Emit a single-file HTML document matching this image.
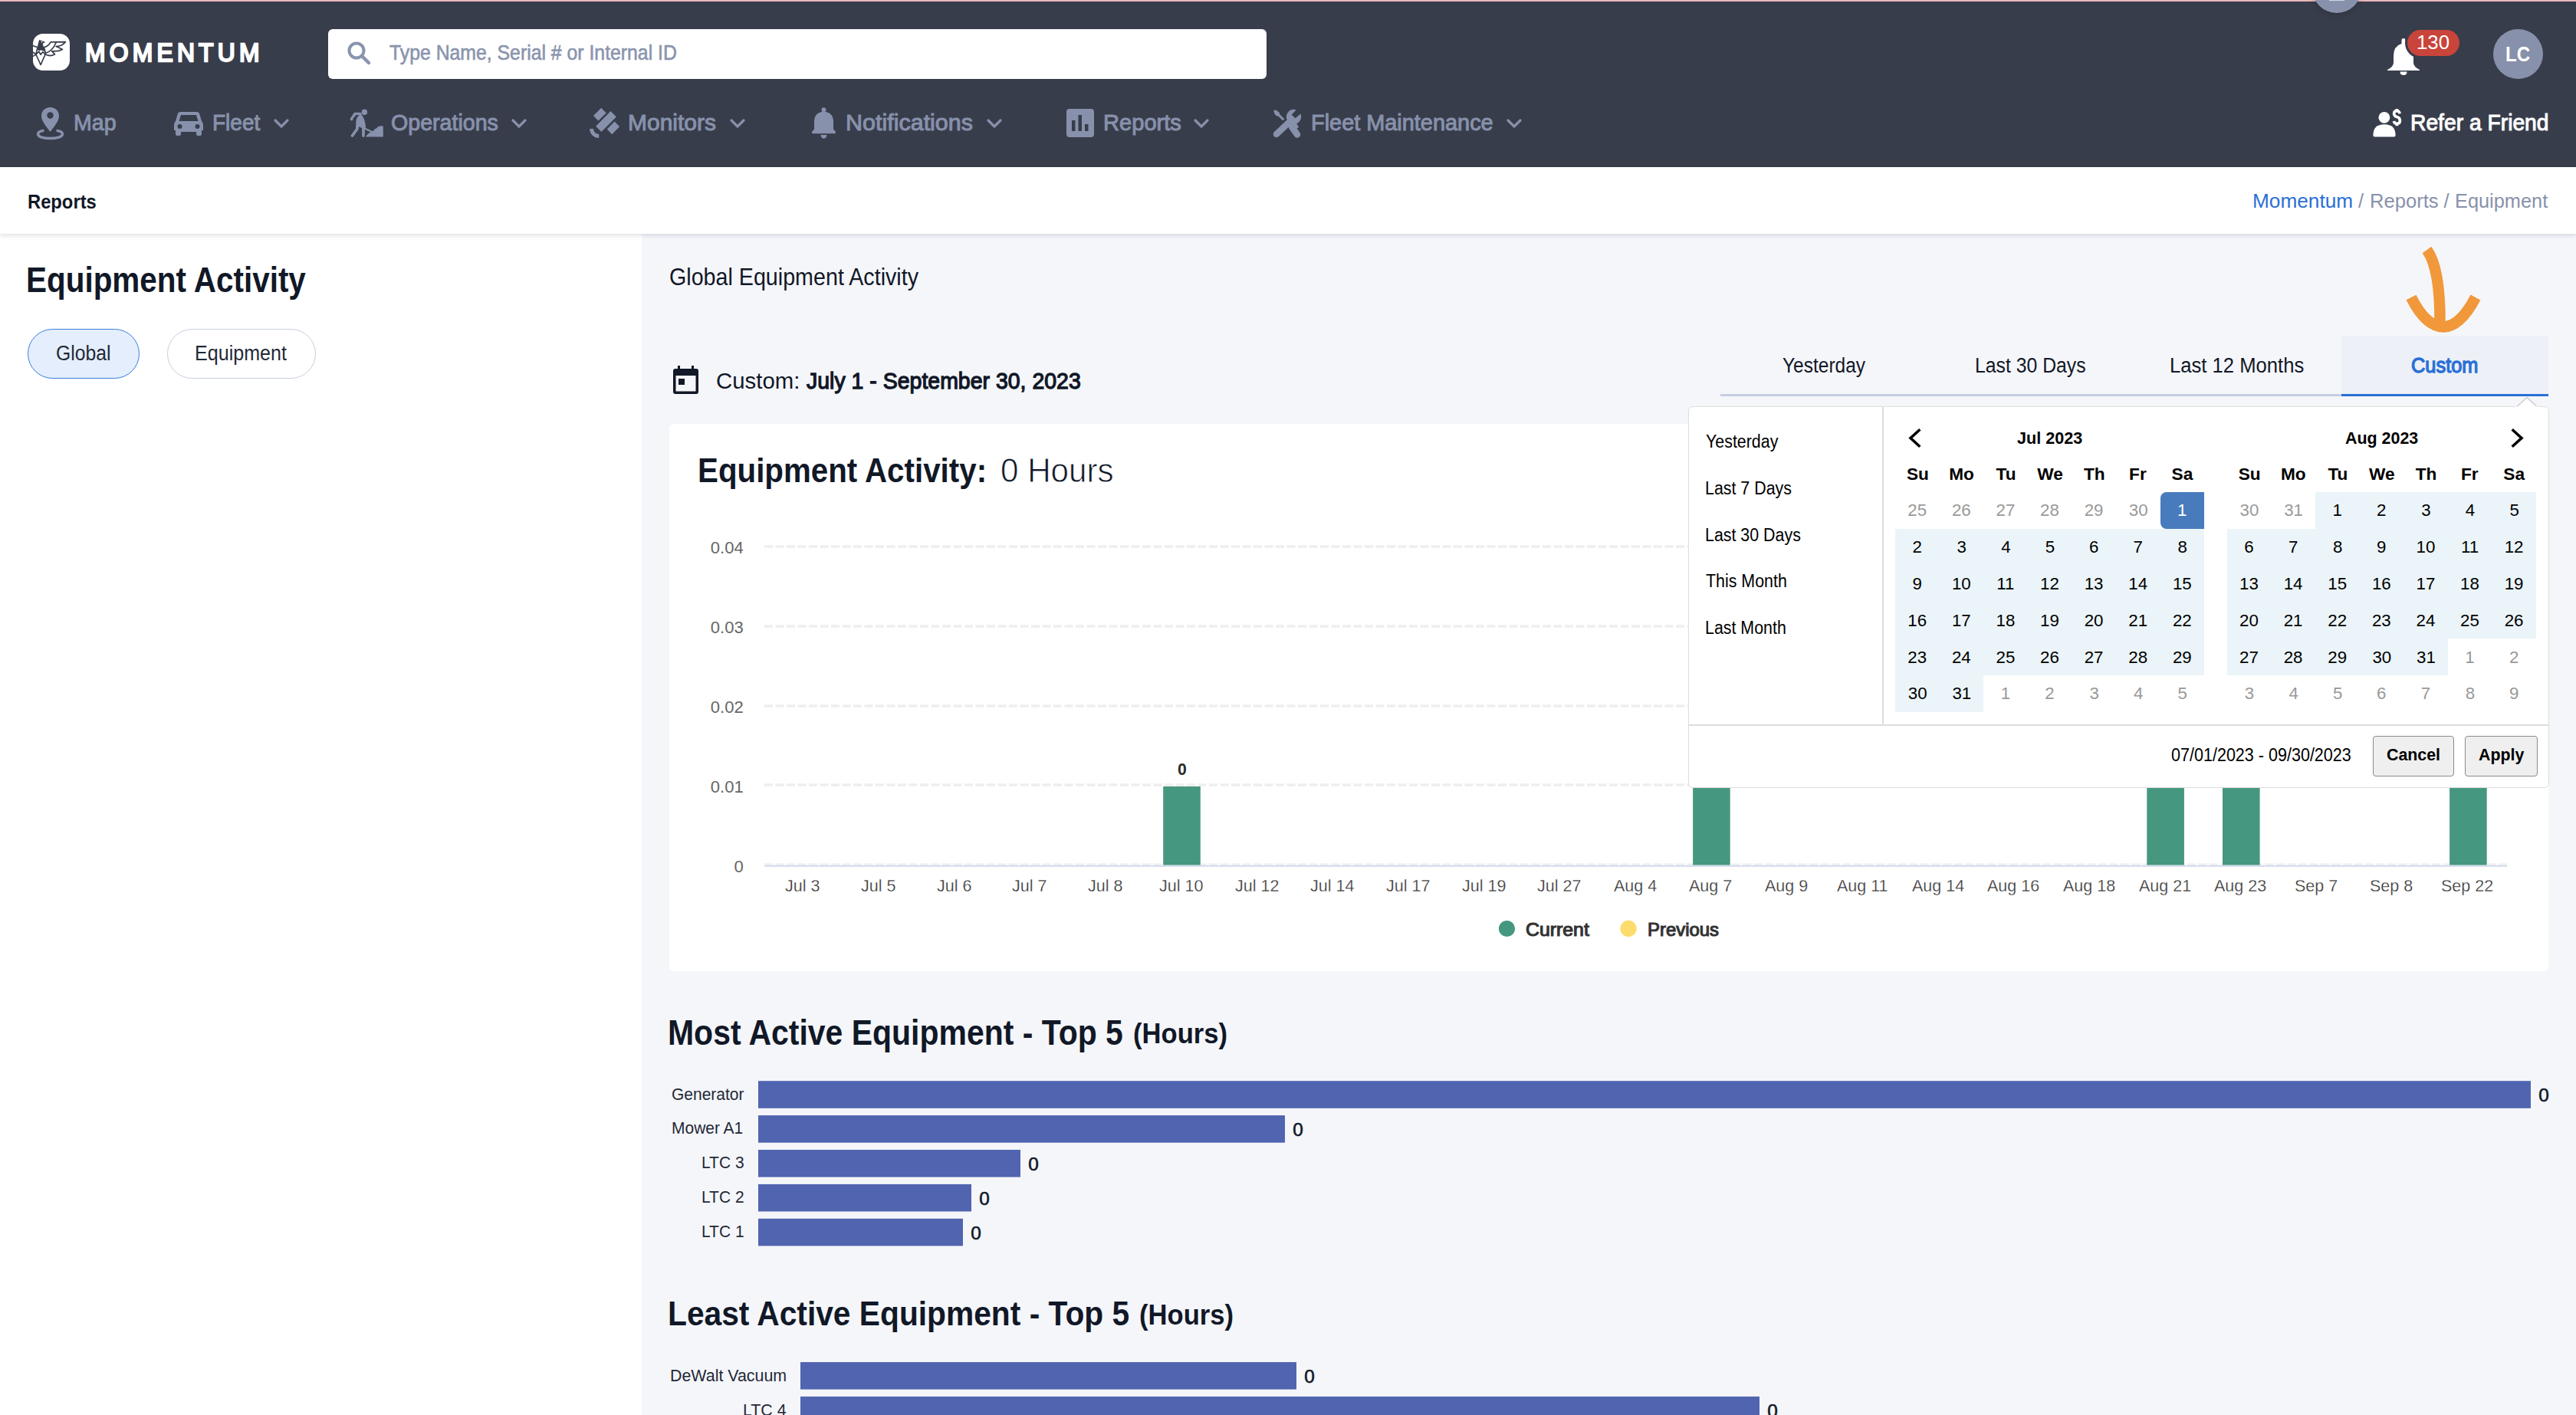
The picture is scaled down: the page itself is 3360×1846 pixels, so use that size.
<!DOCTYPE html>
<html><head><meta charset="utf-8"><title>Equipment Activity</title>
<style>
html,body{margin:0;padding:0;}
body{width:3360px;height:1846px;overflow:hidden;position:relative;background:#f5f6fa;font-family:'Liberation Sans',sans-serif;}
body>div,body>span,body>svg{position:absolute;box-sizing:border-box;}
body>span{white-space:nowrap;transform-origin:0 0;}
@media (max-width:2200px){html{zoom:0.5;}}
</style></head><body>
<div style="left:0px;top:0px;width:3360px;height:218px;background:#383d4b;border-radius:0px;"></div>
<div style="left:0px;top:0px;width:3360px;height:2px;background:#e9b8ba;border-radius:0px;"></div>
<div style="left:3016px;top:-47px;width:64px;height:64px;background:#8791ab;border-radius:32px;box-shadow:0 0 10px rgba(0,0,0,.25);"></div>
<div style="left:3038px;top:0px;width:20px;height:1px;background:#d4d8e2;border-radius:0px;"></div>
<div style="left:43px;top:44px;width:48px;height:48px;background:#ffffff;border-radius:13px;"></div>
<div style="left:428px;top:38px;width:1224px;height:65px;background:#ffffff;border-radius:6px;"></div>
<div style="left:3252px;top:38px;width:65px;height:65px;background:#8791ab;border-radius:33px;"></div>
<div style="left:0px;top:305px;width:837px;height:1541px;background:#ffffff;border-radius:0px;"></div>
<div style="left:0px;top:218px;width:3360px;height:87px;background:#ffffff;border-radius:0px;box-shadow:0 2px 6px rgba(17,24,39,.14);"></div>
<div style="left:36px;top:429px;width:146px;height:65px;background:#e4eefc;border-radius:33px;border:1.5px solid #3b7ddd;"></div>
<div style="left:218px;top:429px;width:194px;height:65px;background:#ffffff;border-radius:33px;border:1.5px solid #c6cee0;"></div>
<div style="left:2244px;top:514px;width:1080px;height:3px;background:#c5cde0;border-radius:0px;"></div>
<div style="left:3054px;top:438px;width:270px;height:76px;background:#edf1f7;border-radius:0px;"></div>
<div style="left:3054px;top:514px;width:270px;height:3px;background:#2a6fd6;border-radius:0px;"></div>
<div style="left:873px;top:553px;width:2451px;height:714px;background:#ffffff;border-radius:6px;"></div>
<svg width="3360" height="1846" viewBox="0 0 3360 1846" style="left:0;top:0"><g fill="none" stroke="#383d4b" stroke-width="1.7" stroke-linejoin="round" stroke-linecap="round"><path d="M46.9 71 L53.1 84.5 L59 71"/><path d="M46.9 70.8 L50.7 67.3 L53.1 71.2 L55.8 67.7 L59 70.8"/><path d="M48.6 63.5 L46.9 70.8"/><path d="M57.3 61.5 L59.5 69.5"/><path d="M57.4 61.8 Q63.5 60 66.1 54.8 L85.5 54.6 Q81 60.6 73.4 60.5"/><path d="M73.4 60.6 L81.5 64.5 Q76 67.5 67.7 66.8"/><path d="M67.7 66.8 L71.6 70.8 Q66 74 59.8 71.3"/><path d="M59.6 69.3 Q69 66 73.2 55.2"/><path d="M43.5 59.8 Q46 61 48.6 61.6"/><path d="M43.5 73.2 Q45 72 47 71.5"/><path d="M43.5 68.5 L46.9 70.8"/></g><path fill="#383d4b" d="M51.1 52.1 L57.8 54.2 L58.8 55.4 L55.8 56.4 L56.8 61.6 L58.6 67.3 L55.8 66 L53.1 65.5 L50.6 66.6 L48.3 63.7 L49.9 56.6 Z"/><circle cx="54.4" cy="54.6" r="0.9" fill="#fff"/><circle cx="465" cy="66" r="9.5" fill="none" stroke="#8a94ae" stroke-width="4"/><line x1="472" y1="73" x2="481" y2="82" stroke="#8a94ae" stroke-width="4.5" stroke-linecap="round"/><path fill="#8791ab" d="M65.5 140 C72.5 140 77 145 77 151.5 C77 158.5 69 167 65.5 172 C62 167 54 158.5 54 151.5 C54 145 58.5 140 65.5 140 Z"/><circle cx="65.5" cy="150.5" r="4.2" fill="#383d4b"/><path d="M56 170.5 C50 171.5 49.5 173.5 49.5 175 C49.5 178.5 57 180.5 65.5 180.5 C74 180.5 81.5 178.5 81.5 175 C81.5 173.5 81 171.5 75 170.5" fill="none" stroke="#8791ab" stroke-width="3.5" stroke-linecap="round"/><path fill="#8791ab" d="M235 146 L257 146 Q259 146 260 148 L263 158 Q265 160 265 164 L265 170 L263 170 L263 175 Q263 177 261 177 L258 177 Q256 177 256 175 L256 172 L236 172 L236 175 Q236 177 234 177 L231 177 Q229 177 229 175 L229 170 L227 170 L227 164 Q227 160 229 158 L232 148 Q233 146 235 146 Z M236 150 L233.5 158 L258.5 158 L256 150 Z"/><circle cx="234.5" cy="165" r="3" fill="#383d4b"/><circle cx="257.5" cy="165" r="3" fill="#383d4b"/><g fill="#8791ab" stroke="#8791ab" stroke-linecap="round" stroke-linejoin="round"><circle cx="475.4" cy="146.2" r="3.7" stroke="none"/><path d="M470 148.5 L463 148.5 L458.5 155.5" fill="none" stroke-width="3.6"/><path d="M471 150 Q475 154 476.5 166 L469 163 L466 167 L465 160 Q465 152 471 150 Z" stroke-width="1.5"/><path d="M466 163 L466 168 L459.5 177" fill="none" stroke-width="3.8"/><path d="M474 166 L474 177" fill="none" stroke-width="3.8"/><path d="M466 163 L486 172.5" fill="none" stroke-width="2"/><path d="M477 178.5 Q480 173 486.5 171 Q489 167.5 491 167.5 Q494 163.5 499.8 164.5 L499.8 178.5 Z" stroke="none"/><path d="M461.5 155 L466 151" fill="none" stroke="#383d4b" stroke-width="2"/></g><g fill="#8791ab"><path d="M784.2 140.8 L790.7 147.4 L780.4 157.6 L774 151 Z"/><path d="M796.5 145 L803.9 152.5 L784.4 172 L777.2 164.8 Z"/><path d="M801.6 158.6 L808.1 165.2 L798.2 175.2 L791.8 168.6 Z"/><path d="M771.6 168 A 9.6 9.6 0 0 0 781.2 177.6" fill="none" stroke="#8791ab" stroke-width="5"/></g><g fill="#8791ab"><circle cx="1074.5" cy="143.3" r="3"/><path d="M1074.5 145.5 Q1062.5 146.5 1062 158 L1062 168.5 L1059 172 Q1058.3 174 1060.5 174.3 L1088.5 174.3 Q1090.7 174 1090 172 L1087 168.5 L1087 158 Q1086.5 146.5 1074.5 145.5 Z"/><path d="M1070.4 176 L1078.6 176 Q1078 180.7 1074.5 180.7 Q1071 180.7 1070.4 176 Z"/></g><rect x="1391" y="142" width="36" height="37" rx="4" fill="#8791ab"/><g fill="#383d4b"><rect x="1398" y="157" width="4.5" height="14"/><rect x="1406.5" y="150" width="4.5" height="21"/><rect x="1415" y="162" width="4.5" height="9"/></g><g fill="#8791ab" stroke="#8791ab" stroke-linecap="round"><path d="M1663 145 L1673.5 155.5" stroke-width="3" fill="none"/><path d="M1661.5 145.5 L1664 143.5 L1668.5 146.5 L1669.5 150 L1666.5 152 L1663 149.5 Z" stroke="none"/><path d="M1685 165.5 L1692 175.5" stroke-width="8.5" fill="none"/><path d="M1681 166 L1690 159 L1694 166 L1686 171 Z" stroke="none"/><path d="M1665 175 L1682 159" stroke-width="8.5" fill="none"/><path d="M1690.6 143.3 A 9.6 9.6 0 1 0 1696.3 148.6 L1689.5 154.3 L1684.7 149.8 Z" stroke="none"/></g><polyline points="359,157 367,165 375,157" fill="none" stroke="#8791ab" stroke-width="3.2" stroke-linecap="round" stroke-linejoin="round"/><polyline points="669,157 677,165 685,157" fill="none" stroke="#8791ab" stroke-width="3.2" stroke-linecap="round" stroke-linejoin="round"/><polyline points="954,157 962,165 970,157" fill="none" stroke="#8791ab" stroke-width="3.2" stroke-linecap="round" stroke-linejoin="round"/><polyline points="1289,157 1297,165 1305,157" fill="none" stroke="#8791ab" stroke-width="3.2" stroke-linecap="round" stroke-linejoin="round"/><polyline points="1559,157 1567,165 1575,157" fill="none" stroke="#8791ab" stroke-width="3.2" stroke-linecap="round" stroke-linejoin="round"/><polyline points="1967,157 1975,165 1983,157" fill="none" stroke="#8791ab" stroke-width="3.2" stroke-linecap="round" stroke-linejoin="round"/><g fill="#fff"><path d="M3135 50 Q3137.5 50 3137.5 53 L3137.5 57 Q3148 60 3148 73 L3148 82 Q3148 87 3156 91 L3156 92 L3114 92 L3114 91 Q3122 87 3122 82 L3122 73 Q3122 60 3132.5 57 L3132.5 53 Q3132.5 50 3135 50 Z"/><path d="M3130.5 93.5 L3139.5 93.5 Q3139.5 98 3135 98 Q3130.5 98 3130.5 93.5 Z"/></g><g fill="#fff"><circle cx="3109.9" cy="153.3" r="7.4"/><path d="M3095.4 176.5 Q3095.4 162.3 3110 162.3 Q3124.6 162.3 3124.6 176.5 Q3124.6 178.6 3122.5 178.6 L3097.5 178.6 Q3095.4 178.6 3095.4 176.5 Z"/><rect x="3124.5" y="142" width="3.8" height="3.5"/><rect x="3124.5" y="160.7" width="3.8" height="3.5"/></g><path d="M3130.3 148.2 Q3129.2 144.6 3126.4 144.6 Q3122.6 144.6 3122.6 148.3 Q3122.6 151.6 3126.4 152.6 Q3130.4 153.6 3130.4 157.4 Q3130.4 161.3 3126.4 161.3 Q3123.2 161.3 3122.3 158" fill="none" stroke="#fff" stroke-width="3.6"/><g fill="#111827"><rect x="878" y="481" width="33" height="33" rx="3"/><rect x="884" y="477" width="3" height="7"/><rect x="902" y="477" width="3" height="7"/></g><rect x="881.5" y="490" width="26" height="20.5" fill="#f5f6fa"/><rect x="885" y="494" width="8" height="8" fill="#111827"/><g fill="none" stroke="#f0983a" stroke-width="14.5" stroke-linecap="butt" stroke-linejoin="round"><path d="M3165.5 326 Q3183 350 3182.5 422"/><path d="M3145 388 Q3164 426 3187 426.5 Q3209 426 3229 388"/></g><line x1="997" y1="713" x2="3270" y2="713" stroke="#eeeeee" stroke-width="3.4" stroke-dasharray="11 3.5"/><line x1="997" y1="817" x2="3270" y2="817" stroke="#eeeeee" stroke-width="3.4" stroke-dasharray="11 3.5"/><line x1="997" y1="921" x2="3270" y2="921" stroke="#eeeeee" stroke-width="3.4" stroke-dasharray="11 3.5"/><line x1="997" y1="1024" x2="3270" y2="1024" stroke="#eeeeee" stroke-width="3.4" stroke-dasharray="11 3.5"/><line x1="997" y1="1127.5" x2="3270" y2="1127.5" stroke="#ececec" stroke-width="2" stroke-dasharray="11 3.5"/><line x1="997" y1="1129.7" x2="3270" y2="1129.7" stroke="#d3d9ec" stroke-width="2"/><rect x="1517.2" y="1026" width="48.6" height="102.5" fill="#46977f"/><rect x="2208.1" y="1026" width="48.6" height="102.5" fill="#46977f"/><rect x="2800.3" y="1026" width="48.6" height="102.5" fill="#46977f"/><rect x="2899.0" y="1026" width="48.6" height="102.5" fill="#46977f"/><rect x="3195.1" y="1026" width="48.6" height="102.5" fill="#46977f"/><circle cx="1965.5" cy="1211.5" r="10.6" fill="#46977f"/><circle cx="2124" cy="1211.5" r="10.7" fill="#fcdc6c"/><rect x="989" y="1410.2" width="2312" height="35.6" fill="#5164b0"/><rect x="989" y="1455.1" width="687" height="35.6" fill="#5164b0"/><rect x="989" y="1500.0" width="342" height="35.6" fill="#5164b0"/><rect x="989" y="1544.9" width="278" height="35.6" fill="#5164b0"/><rect x="989" y="1589.8" width="267" height="35.6" fill="#5164b0"/><rect x="1044" y="1777.0" width="647" height="35.6" fill="#5164b0"/><rect x="1044" y="1821.9" width="1251" height="35.6" fill="#5164b0"/></svg>
<div style="left:3140px;top:39px;width:68px;height:34px;background:#c9443a;border-radius:17px;box-shadow:0 0 0 3px #383d4b;"></div>
<span style="left:111.19px;top:68.79px;font:400 33.50px/0 'Liberation Sans';color:#ffffff;letter-spacing:5.50px;-webkit-text-stroke:2.3px #ffffff;transform:scaleX(0.9500);">MOMENTUM</span>
<span style="left:508.28px;top:68.68px;font:400 26.89px/0 'Liberation Sans';color:#8a94ae;-webkit-text-stroke:0.6px #8a94ae;transform:scaleX(0.9226);">Type Name, Serial # or Internal ID</span>
<span style="left:95.56px;top:159.67px;font:400 29.80px/0 'Liberation Sans';color:#8791ab;-webkit-text-stroke:1.0px #8791ab;transform:scaleX(0.9579);">Map</span>
<span style="left:276.59px;top:159.67px;font:400 29.80px/0 'Liberation Sans';color:#8791ab;-webkit-text-stroke:1.0px #8791ab;transform:scaleX(0.9403);">Fleet</span>
<span style="left:509.52px;top:159.67px;font:400 29.80px/0 'Liberation Sans';color:#8791ab;-webkit-text-stroke:1.0px #8791ab;transform:scaleX(0.9600);">Operations</span>
<span style="left:819.49px;top:159.67px;font:400 29.80px/0 'Liberation Sans';color:#8791ab;-webkit-text-stroke:1.0px #8791ab;transform:scaleX(1.0062);">Monitors</span>
<span style="left:1103.47px;top:159.67px;font:400 29.80px/0 'Liberation Sans';color:#8791ab;-webkit-text-stroke:1.0px #8791ab;transform:scaleX(1.0229);">Notifications</span>
<span style="left:1438.53px;top:159.67px;font:400 29.80px/0 'Liberation Sans';color:#8791ab;-webkit-text-stroke:1.0px #8791ab;transform:scaleX(0.9767);">Reports</span>
<span style="left:1709.55px;top:159.67px;font:400 29.80px/0 'Liberation Sans';color:#8791ab;-webkit-text-stroke:1.0px #8791ab;transform:scaleX(0.9694);">Fleet Maintenance</span>
<span style="left:3143.58px;top:159.67px;font:400 29.80px/0 'Liberation Sans';color:#ffffff;-webkit-text-stroke:1.0px #ffffff;transform:scaleX(0.9479);">Refer a Friend</span>
<span style="left:3151.98px;top:55.26px;font:400 25.21px/0 'Liberation Sans';color:#ffffff;transform:scaleX(1.0236);">130</span>
<span style="left:3268.14px;top:70.57px;font:700 28.05px/0 'Liberation Sans';color:#ffffff;transform:scaleX(0.8580);">LC</span>
<span style="left:35.81px;top:263.08px;font:700 26.60px/0 'Liberation Sans';color:#111827;transform:scaleX(0.8932);">Reports</span>
<span style="left:2937.93px;top:261.93px;font:400 25.29px/0 'Liberation Sans';color:#2a6fd6;transform:scaleX(1.0374);">Momentum</span>
<span style="left:3076.00px;top:261.93px;font:400 25.29px/0 'Liberation Sans';color:#8791ab;">/</span>
<span style="left:3090.97px;top:261.93px;font:400 25.29px/0 'Liberation Sans';color:#8791ab;transform:scaleX(1.0130);">Reports</span>
<span style="left:3187.60px;top:261.93px;font:400 25.29px/0 'Liberation Sans';color:#8791ab;">/</span>
<span style="left:3201.69px;top:261.93px;font:400 25.29px/0 'Liberation Sans';color:#8791ab;transform:scaleX(1.0030);">Equipment</span>
<span style="left:34.15px;top:365.63px;font:700 45.78px/0 'Liberation Sans';color:#111827;transform:scaleX(0.8839);">Equipment Activity</span>
<span style="left:73.11px;top:461.43px;font:400 27.62px/0 'Liberation Sans';color:#1f2937;transform:scaleX(0.8948);">Global</span>
<span style="left:253.78px;top:461.43px;font:400 27.62px/0 'Liberation Sans';color:#1f2937;transform:scaleX(0.9085);">Equipment</span>
<span style="left:873.08px;top:361.67px;font:400 31.25px/0 'Liberation Sans';color:#111827;transform:scaleX(0.9172);">Global Equipment Activity</span>
<span style="left:934.03px;top:495.97px;font:400 30.38px/0 'Liberation Sans';color:#111827;transform:scaleX(0.9672);">Custom:</span>
<span style="left:1051.61px;top:495.97px;font:400 30.38px/0 'Liberation Sans';color:#111827;-webkit-text-stroke:1.3px #111827;transform:scaleX(0.9376);">July 1 - September 30, 2023</span>
<span style="left:2324.80px;top:476.73px;font:400 26.74px/0 'Liberation Sans';color:#111827;transform:scaleX(0.9169);">Yesterday</span>
<span style="left:2576.15px;top:476.73px;font:400 26.74px/0 'Liberation Sans';color:#111827;transform:scaleX(0.9267);">Last 30 Days</span>
<span style="left:2830.08px;top:476.73px;font:400 26.74px/0 'Liberation Sans';color:#111827;transform:scaleX(0.9588);">Last 12 Months</span>
<span style="left:3145.47px;top:477.08px;font:400 27.18px/0 'Liberation Sans';color:#2a6fd6;-webkit-text-stroke:1.3px #2a6fd6;transform:scaleX(0.9341);">Custom</span>
<span style="left:909.88px;top:613.63px;font:700 44.33px/0 'Liberation Sans';color:#111827;transform:scaleX(0.9095);">Equipment Activity:</span>
<span style="left:1304.65px;top:613.85px;font:400 43.70px/0 'Liberation Sans';color:#111827;-webkit-text-stroke:0.8px #ffffff;transform:scaleX(0.9646);">0 Hours</span>
<span style="left:926.75px;top:715.35px;font:400 22.06px/0 'Liberation Sans';color:#666666;">0.04</span>
<span style="left:926.75px;top:819.35px;font:400 22.06px/0 'Liberation Sans';color:#666666;">0.03</span>
<span style="left:926.75px;top:923.35px;font:400 22.06px/0 'Liberation Sans';color:#666666;">0.02</span>
<span style="left:926.75px;top:1027.35px;font:400 22.06px/0 'Liberation Sans';color:#666666;">0.01</span>
<span style="left:957.40px;top:1131.35px;font:400 22.06px/0 'Liberation Sans';color:#666666;">0</span>
<span style="left:1024.39px;top:1155.69px;font:400 21.95px/0 'Liberation Sans';color:#333333;-webkit-text-stroke:0.3px #ffffff;transform:scaleX(0.9800);">Jul 3</span>
<span style="left:1123.09px;top:1155.69px;font:400 21.95px/0 'Liberation Sans';color:#333333;-webkit-text-stroke:0.3px #ffffff;transform:scaleX(0.9800);">Jul 5</span>
<span style="left:1221.79px;top:1155.69px;font:400 21.95px/0 'Liberation Sans';color:#333333;-webkit-text-stroke:0.3px #ffffff;transform:scaleX(0.9800);">Jul 6</span>
<span style="left:1320.49px;top:1155.69px;font:400 21.95px/0 'Liberation Sans';color:#333333;-webkit-text-stroke:0.3px #ffffff;transform:scaleX(0.9800);">Jul 7</span>
<span style="left:1419.19px;top:1155.69px;font:400 21.95px/0 'Liberation Sans';color:#333333;-webkit-text-stroke:0.3px #ffffff;transform:scaleX(0.9800);">Jul 8</span>
<span style="left:1511.91px;top:1155.69px;font:400 21.95px/0 'Liberation Sans';color:#333333;-webkit-text-stroke:0.3px #ffffff;transform:scaleX(0.9800);">Jul 10</span>
<span style="left:1610.61px;top:1155.69px;font:400 21.95px/0 'Liberation Sans';color:#333333;-webkit-text-stroke:0.3px #ffffff;transform:scaleX(0.9800);">Jul 12</span>
<span style="left:1709.31px;top:1155.69px;font:400 21.95px/0 'Liberation Sans';color:#333333;-webkit-text-stroke:0.3px #ffffff;transform:scaleX(0.9800);">Jul 14</span>
<span style="left:1808.01px;top:1155.69px;font:400 21.95px/0 'Liberation Sans';color:#333333;-webkit-text-stroke:0.3px #ffffff;transform:scaleX(0.9800);">Jul 17</span>
<span style="left:1906.71px;top:1155.69px;font:400 21.95px/0 'Liberation Sans';color:#333333;-webkit-text-stroke:0.3px #ffffff;transform:scaleX(0.9800);">Jul 19</span>
<span style="left:2005.41px;top:1155.69px;font:400 21.95px/0 'Liberation Sans';color:#333333;-webkit-text-stroke:0.3px #ffffff;transform:scaleX(0.9800);">Jul 27</span>
<span style="left:2104.71px;top:1155.69px;font:400 21.95px/0 'Liberation Sans';color:#333333;-webkit-text-stroke:0.3px #ffffff;transform:scaleX(0.9800);">Aug 4</span>
<span style="left:2203.41px;top:1155.69px;font:400 21.95px/0 'Liberation Sans';color:#333333;-webkit-text-stroke:0.3px #ffffff;transform:scaleX(0.9800);">Aug 7</span>
<span style="left:2302.11px;top:1155.69px;font:400 21.95px/0 'Liberation Sans';color:#333333;-webkit-text-stroke:0.3px #ffffff;transform:scaleX(0.9800);">Aug 9</span>
<span style="left:2395.63px;top:1155.69px;font:400 21.95px/0 'Liberation Sans';color:#333333;-webkit-text-stroke:0.3px #ffffff;transform:scaleX(0.9800);">Aug 11</span>
<span style="left:2493.53px;top:1155.69px;font:400 21.95px/0 'Liberation Sans';color:#333333;-webkit-text-stroke:0.3px #ffffff;transform:scaleX(0.9800);">Aug 14</span>
<span style="left:2592.23px;top:1155.69px;font:400 21.95px/0 'Liberation Sans';color:#333333;-webkit-text-stroke:0.3px #ffffff;transform:scaleX(0.9800);">Aug 16</span>
<span style="left:2690.93px;top:1155.69px;font:400 21.95px/0 'Liberation Sans';color:#333333;-webkit-text-stroke:0.3px #ffffff;transform:scaleX(0.9800);">Aug 18</span>
<span style="left:2789.63px;top:1155.69px;font:400 21.95px/0 'Liberation Sans';color:#333333;-webkit-text-stroke:0.3px #ffffff;transform:scaleX(0.9800);">Aug 21</span>
<span style="left:2888.33px;top:1155.69px;font:400 21.95px/0 'Liberation Sans';color:#333333;-webkit-text-stroke:0.3px #ffffff;transform:scaleX(0.9800);">Aug 23</span>
<span style="left:2992.52px;top:1155.69px;font:400 21.95px/0 'Liberation Sans';color:#333333;-webkit-text-stroke:0.3px #ffffff;transform:scaleX(0.9800);">Sep 7</span>
<span style="left:3091.22px;top:1155.69px;font:400 21.95px/0 'Liberation Sans';color:#333333;-webkit-text-stroke:0.3px #ffffff;transform:scaleX(0.9800);">Sep 8</span>
<span style="left:3183.94px;top:1155.69px;font:400 21.95px/0 'Liberation Sans';color:#333333;-webkit-text-stroke:0.3px #ffffff;transform:scaleX(0.9800);">Sep 22</span>
<span style="left:1536.00px;top:1004.45px;font:700 21.20px/0 'Liberation Sans';color:#2b2b2b;">0</span>
<span style="left:2226.90px;top:1004.45px;font:700 21.20px/0 'Liberation Sans';color:#2b2b2b;">0</span>
<span style="left:2819.10px;top:1004.45px;font:700 21.20px/0 'Liberation Sans';color:#2b2b2b;">0</span>
<span style="left:2917.80px;top:1004.45px;font:700 21.20px/0 'Liberation Sans';color:#2b2b2b;">0</span>
<span style="left:3213.90px;top:1004.45px;font:700 21.20px/0 'Liberation Sans';color:#2b2b2b;">0</span>
<span style="left:1989.52px;top:1212.94px;font:400 23.26px/0 'Liberation Sans';color:#333333;-webkit-text-stroke:1.1px #333333;transform:scaleX(1.0682);">Current</span>
<span style="left:2148.54px;top:1212.94px;font:400 23.26px/0 'Liberation Sans';color:#333333;-webkit-text-stroke:1.1px #333333;transform:scaleX(1.0286);">Previous</span>
<span style="left:871.36px;top:1346.87px;font:700 46.51px/0 'Liberation Sans';color:#111827;transform:scaleX(0.8808);">Most Active Equipment - Top 5</span>
<span style="left:1478.05px;top:1349.40px;font:700 36.34px/0 'Liberation Sans';color:#111827;transform:scaleX(0.9523);">(Hours)</span>
<span style="left:875.90px;top:1427.54px;font:400 22.09px/0 'Liberation Sans';color:#1f2937;transform:scaleX(0.9500);">Generator</span>
<span style="left:3311.30px;top:1429.06px;font:400 24.36px/0 'Liberation Sans';color:#111827;-webkit-text-stroke:0.6px #111827;">0</span>
<span style="left:875.85px;top:1472.44px;font:400 22.09px/0 'Liberation Sans';color:#1f2937;transform:scaleX(0.9500);">Mower A1</span>
<span style="left:1686.30px;top:1473.96px;font:400 24.36px/0 'Liberation Sans';color:#111827;-webkit-text-stroke:0.6px #111827;">0</span>
<span style="left:914.71px;top:1517.34px;font:400 22.09px/0 'Liberation Sans';color:#1f2937;transform:scaleX(0.9500);">LTC 3</span>
<span style="left:1341.30px;top:1518.86px;font:400 24.36px/0 'Liberation Sans';color:#111827;-webkit-text-stroke:0.6px #111827;">0</span>
<span style="left:914.71px;top:1562.24px;font:400 22.09px/0 'Liberation Sans';color:#1f2937;transform:scaleX(0.9500);">LTC 2</span>
<span style="left:1277.30px;top:1563.76px;font:400 24.36px/0 'Liberation Sans';color:#111827;-webkit-text-stroke:0.6px #111827;">0</span>
<span style="left:914.71px;top:1607.14px;font:400 22.09px/0 'Liberation Sans';color:#1f2937;transform:scaleX(0.9500);">LTC 1</span>
<span style="left:1266.30px;top:1608.66px;font:400 24.36px/0 'Liberation Sans';color:#111827;-webkit-text-stroke:0.6px #111827;">0</span>
<span style="left:871.29px;top:1714.38px;font:700 45.06px/0 'Liberation Sans';color:#111827;transform:scaleX(0.9044);">Least Active Equipment - Top 5</span>
<span style="left:1486.05px;top:1716.40px;font:700 36.34px/0 'Liberation Sans';color:#111827;transform:scaleX(0.9523);">(Hours)</span>
<span style="left:873.57px;top:1795.19px;font:400 22.53px/0 'Liberation Sans';color:#1f2937;transform:scaleX(0.9500);">DeWalt Vacuum</span>
<span style="left:1701.30px;top:1795.86px;font:400 24.36px/0 'Liberation Sans';color:#111827;-webkit-text-stroke:0.6px #111827;">0</span>
<span style="left:968.84px;top:1840.19px;font:400 22.53px/0 'Liberation Sans';color:#1f2937;transform:scaleX(0.9500);">LTC 4</span>
<span style="left:2305.30px;top:1840.76px;font:400 24.36px/0 'Liberation Sans';color:#111827;-webkit-text-stroke:0.6px #111827;">0</span>
<div style="left:2202px;top:530px;width:1123px;height:498px;background:#ffffff;border-radius:6px;border:1.5px solid #dddddd;"></div>
<svg width="40" height="20" viewBox="0 0 40 20" style="left:3276px;top:516px"><path d="M6.5 15 L20 2.5 L33.5 15" fill="#fff" stroke="#cccccc" stroke-width="1.5"/><rect x="5" y="14.2" width="30" height="5" fill="#fff"/></svg>
<div style="left:2455px;top:531px;width:1.5px;height:414px;background:#dddddd;border-radius:0px;"></div>
<div style="left:2203px;top:945px;width:1121px;height:1.5px;background:#dddddd;border-radius:0px;"></div>
<div style="left:2472.2px;top:690.1px;width:403.1999999999998px;height:191.0px;background:#ebf4f8;border-radius:0px;"></div>
<div style="left:2472.2px;top:881.1px;width:115.19999999999982px;height:47.75px;background:#ebf4f8;border-radius:0px;"></div>
<div style="left:2817.7999999999997px;top:642.35px;width:57.59999999999991px;height:47.75px;background:#477bbd;border-radius:0px;border-radius:8px 0 0 8px;"></div>
<div style="left:3020.2px;top:642.35px;width:288.0px;height:47.75px;background:#ebf4f8;border-radius:0px;"></div>
<div style="left:2905px;top:690.1px;width:403.1999999999998px;height:143.25px;background:#ebf4f8;border-radius:0px;"></div>
<div style="left:2905px;top:833.35px;width:288.0px;height:47.75px;background:#ebf4f8;border-radius:0px;"></div>
<div style="left:3095px;top:960px;width:106px;height:52.5px;background:#efefef;border-radius:4px;border:1.5px solid #8a8a8a;"></div>
<div style="left:3215px;top:960px;width:95px;height:52.5px;background:#efefef;border-radius:4px;border:1.5px solid #8a8a8a;"></div>
<svg width="3360" height="1846" viewBox="0 0 3360 1846" style="left:0;top:0"><polyline points="2503,561.5 2492,571.5 2503,581.5" fill="none" stroke="#000" stroke-width="3.6" stroke-linecap="square"/><polyline points="3278,561.5 3289,571.5 3278,581.5" fill="none" stroke="#000" stroke-width="3.6" stroke-linecap="square"/></svg>
<span style="left:2225.00px;top:576.33px;font:400 23.00px/0 'Liberation Sans';color:#000000;transform:scaleX(0.9300);">Yesterday</span>
<span style="left:2224.07px;top:636.98px;font:400 23.00px/0 'Liberation Sans';color:#000000;transform:scaleX(0.9300);">Last 7 Days</span>
<span style="left:2224.07px;top:697.63px;font:400 23.00px/0 'Liberation Sans';color:#000000;transform:scaleX(0.9300);">Last 30 Days</span>
<span style="left:2225.00px;top:758.28px;font:400 23.00px/0 'Liberation Sans';color:#000000;transform:scaleX(0.9300);">This Month</span>
<span style="left:2224.07px;top:818.93px;font:400 23.00px/0 'Liberation Sans';color:#000000;transform:scaleX(0.9300);">Last Month</span>
<span style="left:2631.00px;top:570.84px;font:700 22.97px/0 'Liberation Sans';color:#000000;transform:scaleX(0.9406);">Jul 2023</span>
<span style="left:3059.00px;top:570.74px;font:700 22.67px/0 'Liberation Sans';color:#000000;transform:scaleX(0.9457);">Aug 2023</span>
<span style="left:2486.94px;top:618.34px;font:700 22.67px/0 'Liberation Sans';color:#000000;">Su</span>
<span style="left:2919.74px;top:618.34px;font:700 22.67px/0 'Liberation Sans';color:#000000;">Su</span>
<span style="left:2542.16px;top:618.34px;font:700 22.67px/0 'Liberation Sans';color:#000000;">Mo</span>
<span style="left:2974.96px;top:618.34px;font:700 22.67px/0 'Liberation Sans';color:#000000;">Mo</span>
<span style="left:2603.62px;top:618.34px;font:700 22.67px/0 'Liberation Sans';color:#000000;">Tu</span>
<span style="left:3036.42px;top:618.34px;font:700 22.67px/0 'Liberation Sans';color:#000000;">Tu</span>
<span style="left:2657.31px;top:618.34px;font:700 22.67px/0 'Liberation Sans';color:#000000;">We</span>
<span style="left:3090.11px;top:618.34px;font:700 22.67px/0 'Liberation Sans';color:#000000;">We</span>
<span style="left:2717.98px;top:618.34px;font:700 22.67px/0 'Liberation Sans';color:#000000;">Th</span>
<span style="left:3150.78px;top:618.34px;font:700 22.67px/0 'Liberation Sans';color:#000000;">Th</span>
<span style="left:2777.08px;top:618.34px;font:700 22.67px/0 'Liberation Sans';color:#000000;">Fr</span>
<span style="left:3209.88px;top:618.34px;font:700 22.67px/0 'Liberation Sans';color:#000000;">Fr</span>
<span style="left:2832.54px;top:618.34px;font:700 22.67px/0 'Liberation Sans';color:#000000;">Sa</span>
<span style="left:3265.34px;top:618.34px;font:700 22.67px/0 'Liberation Sans';color:#000000;">Sa</span>
<span style="left:2488.30px;top:666.17px;font:400 22.30px/0 'Liberation Sans';color:#999999;">25</span>
<span style="left:2545.90px;top:666.17px;font:400 22.30px/0 'Liberation Sans';color:#999999;">26</span>
<span style="left:2603.50px;top:666.17px;font:400 22.30px/0 'Liberation Sans';color:#999999;">27</span>
<span style="left:2661.10px;top:666.17px;font:400 22.30px/0 'Liberation Sans';color:#999999;">28</span>
<span style="left:2718.70px;top:666.17px;font:400 22.30px/0 'Liberation Sans';color:#999999;">29</span>
<span style="left:2776.80px;top:666.17px;font:400 22.30px/0 'Liberation Sans';color:#999999;">30</span>
<span style="left:2840.10px;top:666.17px;font:400 22.30px/0 'Liberation Sans';color:#ffffff;">1</span>
<span style="left:2494.50px;top:714.02px;font:400 22.30px/0 'Liberation Sans';color:#000000;">2</span>
<span style="left:2552.60px;top:714.02px;font:400 22.30px/0 'Liberation Sans';color:#000000;">3</span>
<span style="left:2610.20px;top:714.02px;font:400 22.30px/0 'Liberation Sans';color:#000000;">4</span>
<span style="left:2667.80px;top:714.02px;font:400 22.30px/0 'Liberation Sans';color:#000000;">5</span>
<span style="left:2724.90px;top:714.02px;font:400 22.30px/0 'Liberation Sans';color:#000000;">6</span>
<span style="left:2782.50px;top:714.02px;font:400 22.30px/0 'Liberation Sans';color:#000000;">7</span>
<span style="left:2840.60px;top:714.02px;font:400 22.30px/0 'Liberation Sans';color:#000000;">8</span>
<span style="left:2494.50px;top:761.87px;font:400 22.30px/0 'Liberation Sans';color:#000000;">9</span>
<span style="left:2545.90px;top:761.87px;font:400 22.30px/0 'Liberation Sans';color:#000000;">10</span>
<span style="left:2604.33px;top:761.87px;font:400 22.30px/0 'Liberation Sans';color:#000000;">11</span>
<span style="left:2661.10px;top:761.87px;font:400 22.30px/0 'Liberation Sans';color:#000000;">12</span>
<span style="left:2718.70px;top:761.87px;font:400 22.30px/0 'Liberation Sans';color:#000000;">13</span>
<span style="left:2776.30px;top:761.87px;font:400 22.30px/0 'Liberation Sans';color:#000000;">14</span>
<span style="left:2833.90px;top:761.87px;font:400 22.30px/0 'Liberation Sans';color:#000000;">15</span>
<span style="left:2488.30px;top:809.72px;font:400 22.30px/0 'Liberation Sans';color:#000000;">16</span>
<span style="left:2545.90px;top:809.72px;font:400 22.30px/0 'Liberation Sans';color:#000000;">17</span>
<span style="left:2603.50px;top:809.72px;font:400 22.30px/0 'Liberation Sans';color:#000000;">18</span>
<span style="left:2661.10px;top:809.72px;font:400 22.30px/0 'Liberation Sans';color:#000000;">19</span>
<span style="left:2718.70px;top:809.72px;font:400 22.30px/0 'Liberation Sans';color:#000000;">20</span>
<span style="left:2776.30px;top:809.72px;font:400 22.30px/0 'Liberation Sans';color:#000000;">21</span>
<span style="left:2833.90px;top:809.72px;font:400 22.30px/0 'Liberation Sans';color:#000000;">22</span>
<span style="left:2488.30px;top:857.57px;font:400 22.30px/0 'Liberation Sans';color:#000000;">23</span>
<span style="left:2545.90px;top:857.57px;font:400 22.30px/0 'Liberation Sans';color:#000000;">24</span>
<span style="left:2603.50px;top:857.57px;font:400 22.30px/0 'Liberation Sans';color:#000000;">25</span>
<span style="left:2661.10px;top:857.57px;font:400 22.30px/0 'Liberation Sans';color:#000000;">26</span>
<span style="left:2718.70px;top:857.57px;font:400 22.30px/0 'Liberation Sans';color:#000000;">27</span>
<span style="left:2776.30px;top:857.57px;font:400 22.30px/0 'Liberation Sans';color:#000000;">28</span>
<span style="left:2833.90px;top:857.57px;font:400 22.30px/0 'Liberation Sans';color:#000000;">29</span>
<span style="left:2488.80px;top:905.42px;font:400 22.30px/0 'Liberation Sans';color:#000000;">30</span>
<span style="left:2546.40px;top:905.42px;font:400 22.30px/0 'Liberation Sans';color:#000000;">31</span>
<span style="left:2609.70px;top:905.42px;font:400 22.30px/0 'Liberation Sans';color:#999999;">1</span>
<span style="left:2667.30px;top:905.42px;font:400 22.30px/0 'Liberation Sans';color:#999999;">2</span>
<span style="left:2725.40px;top:905.42px;font:400 22.30px/0 'Liberation Sans';color:#999999;">3</span>
<span style="left:2783.00px;top:905.42px;font:400 22.30px/0 'Liberation Sans';color:#999999;">4</span>
<span style="left:2840.60px;top:905.42px;font:400 22.30px/0 'Liberation Sans';color:#999999;">5</span>
<span style="left:2921.60px;top:666.17px;font:400 22.30px/0 'Liberation Sans';color:#999999;">30</span>
<span style="left:2979.20px;top:666.17px;font:400 22.30px/0 'Liberation Sans';color:#999999;">31</span>
<span style="left:3042.50px;top:666.17px;font:400 22.30px/0 'Liberation Sans';color:#000000;">1</span>
<span style="left:3100.10px;top:666.17px;font:400 22.30px/0 'Liberation Sans';color:#000000;">2</span>
<span style="left:3158.20px;top:666.17px;font:400 22.30px/0 'Liberation Sans';color:#000000;">3</span>
<span style="left:3215.80px;top:666.17px;font:400 22.30px/0 'Liberation Sans';color:#000000;">4</span>
<span style="left:3273.40px;top:666.17px;font:400 22.30px/0 'Liberation Sans';color:#000000;">5</span>
<span style="left:2927.30px;top:714.02px;font:400 22.30px/0 'Liberation Sans';color:#000000;">6</span>
<span style="left:2984.90px;top:714.02px;font:400 22.30px/0 'Liberation Sans';color:#000000;">7</span>
<span style="left:3043.00px;top:714.02px;font:400 22.30px/0 'Liberation Sans';color:#000000;">8</span>
<span style="left:3100.10px;top:714.02px;font:400 22.30px/0 'Liberation Sans';color:#000000;">9</span>
<span style="left:3151.50px;top:714.02px;font:400 22.30px/0 'Liberation Sans';color:#000000;">10</span>
<span style="left:3209.93px;top:714.02px;font:400 22.30px/0 'Liberation Sans';color:#000000;">11</span>
<span style="left:3266.70px;top:714.02px;font:400 22.30px/0 'Liberation Sans';color:#000000;">12</span>
<span style="left:2921.10px;top:761.87px;font:400 22.30px/0 'Liberation Sans';color:#000000;">13</span>
<span style="left:2978.70px;top:761.87px;font:400 22.30px/0 'Liberation Sans';color:#000000;">14</span>
<span style="left:3036.30px;top:761.87px;font:400 22.30px/0 'Liberation Sans';color:#000000;">15</span>
<span style="left:3093.90px;top:761.87px;font:400 22.30px/0 'Liberation Sans';color:#000000;">16</span>
<span style="left:3151.50px;top:761.87px;font:400 22.30px/0 'Liberation Sans';color:#000000;">17</span>
<span style="left:3209.10px;top:761.87px;font:400 22.30px/0 'Liberation Sans';color:#000000;">18</span>
<span style="left:3266.70px;top:761.87px;font:400 22.30px/0 'Liberation Sans';color:#000000;">19</span>
<span style="left:2921.10px;top:809.72px;font:400 22.30px/0 'Liberation Sans';color:#000000;">20</span>
<span style="left:2978.70px;top:809.72px;font:400 22.30px/0 'Liberation Sans';color:#000000;">21</span>
<span style="left:3036.30px;top:809.72px;font:400 22.30px/0 'Liberation Sans';color:#000000;">22</span>
<span style="left:3093.90px;top:809.72px;font:400 22.30px/0 'Liberation Sans';color:#000000;">23</span>
<span style="left:3151.50px;top:809.72px;font:400 22.30px/0 'Liberation Sans';color:#000000;">24</span>
<span style="left:3209.10px;top:809.72px;font:400 22.30px/0 'Liberation Sans';color:#000000;">25</span>
<span style="left:3266.70px;top:809.72px;font:400 22.30px/0 'Liberation Sans';color:#000000;">26</span>
<span style="left:2921.10px;top:857.57px;font:400 22.30px/0 'Liberation Sans';color:#000000;">27</span>
<span style="left:2978.70px;top:857.57px;font:400 22.30px/0 'Liberation Sans';color:#000000;">28</span>
<span style="left:3036.30px;top:857.57px;font:400 22.30px/0 'Liberation Sans';color:#000000;">29</span>
<span style="left:3094.40px;top:857.57px;font:400 22.30px/0 'Liberation Sans';color:#000000;">30</span>
<span style="left:3152.00px;top:857.57px;font:400 22.30px/0 'Liberation Sans';color:#000000;">31</span>
<span style="left:3215.30px;top:857.57px;font:400 22.30px/0 'Liberation Sans';color:#999999;">1</span>
<span style="left:3272.90px;top:857.57px;font:400 22.30px/0 'Liberation Sans';color:#999999;">2</span>
<span style="left:2927.80px;top:905.42px;font:400 22.30px/0 'Liberation Sans';color:#999999;">3</span>
<span style="left:2985.40px;top:905.42px;font:400 22.30px/0 'Liberation Sans';color:#999999;">4</span>
<span style="left:3043.00px;top:905.42px;font:400 22.30px/0 'Liberation Sans';color:#999999;">5</span>
<span style="left:3100.10px;top:905.42px;font:400 22.30px/0 'Liberation Sans';color:#999999;">6</span>
<span style="left:3157.70px;top:905.42px;font:400 22.30px/0 'Liberation Sans';color:#999999;">7</span>
<span style="left:3215.80px;top:905.42px;font:400 22.30px/0 'Liberation Sans';color:#999999;">8</span>
<span style="left:3272.90px;top:905.42px;font:400 22.30px/0 'Liberation Sans';color:#999999;">9</span>
<span style="left:2831.50px;top:985.45px;font:400 23.21px/0 'Liberation Sans';color:#000000;transform:scaleX(0.9285);">07/01/2023 - 09/30/2023</span>
<span style="left:3113.30px;top:985.39px;font:700 21.66px/0 'Liberation Sans';color:#000000;transform:scaleX(0.9864);">Cancel</span>
<span style="left:3232.80px;top:985.39px;font:700 21.66px/0 'Liberation Sans';color:#000000;transform:scaleX(0.9854);">Apply</span>
</body></html>
